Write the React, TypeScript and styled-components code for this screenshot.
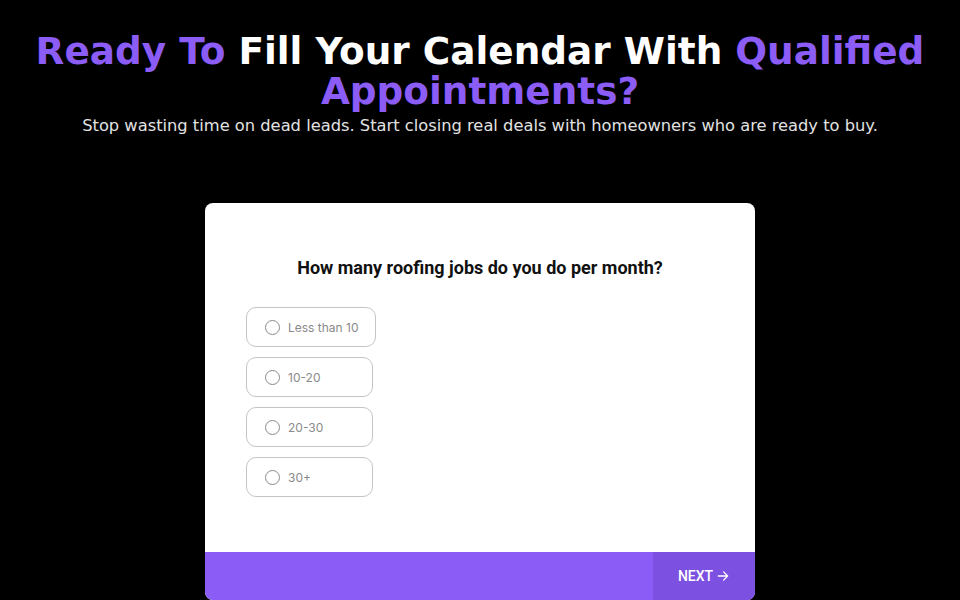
import React, { useState } from "react";
import styled, { createGlobalStyle } from "styled-components";

const Global = createGlobalStyle`
  html, body { margin: 0; padding: 0; background: #000; }
  body { font-family: "DejaVu Sans", sans-serif; }
  * { box-sizing: border-box; }
`;

const Page = styled.div`
  width: 960px;
  height: 600px;
  overflow: hidden;
  background: #000;
  display: flex;
  flex-direction: column;
  align-items: center;
  padding-top: 31px;
`;

const Title = styled.h1`
  margin: 0;
  font-family: "DejaVu Sans", sans-serif;
  font-weight: 700;
  font-size: 37.4px;
  line-height: 40px;
  color: #fff;
  text-align: center;
  width: 940px;
`;

const Accent = styled.span`
  color: #8b5cf6;
`;

const Subtitle = styled.p`
  margin: 5px 0 0;
  font-family: "DejaVu Sans", sans-serif;
  font-size: 16.3px;
  line-height: 20px;
  color: #e2e2e2;
  text-align: center;
  white-space: nowrap;
`;

const Card = styled.div`
  margin-top: 67px;
  width: 550px;
  height: 397px;
  background: #fff;
  border-radius: 8px;
  display: flex;
  flex-direction: column;
  overflow: hidden;
`;

const Body = styled.div`
  flex: 1;
  padding: 54px 41px 0;
  display: flex;
  flex-direction: column;
`;

const Question = styled.h2`
  margin: 0 0 28px;
  font-family: Roboto, sans-serif;
  font-weight: 700;
  font-size: 18px;
  line-height: 22px;
  color: #111;
  text-align: center;
`;

const Options = styled.div`
  display: flex;
  flex-direction: column;
  align-items: flex-start;
  gap: 10px;
`;

const Option = styled.label`
  display: flex;
  align-items: center;
  gap: 8px;
  min-width: 127px;
  height: 40px;
  padding: 0 16px 0 18px;
  border: 1px solid #c4c4c4;
  border-radius: 10px;
  font-family: Inter, sans-serif;
  font-size: 12px;
  color: #8a8a8a;
  cursor: pointer;
`;

const Radio = styled.span<{ $on: boolean }>`
  width: 15px;
  height: 15px;
  border-radius: 50%;
  border: 1.3px solid #8a8a8a;
  background: ${(p) => (p.$on ? "#8b5cf6" : "transparent")};
  flex-shrink: 0;
`;

const Footer = styled.div`
  height: 48px;
  background: #8b5cf6;
  display: flex;
  justify-content: flex-end;
`;

const NextButton = styled.button`
  width: 102px;
  height: 100%;
  border: none;
  background: #7c50e0;
  color: #fff;
  font-family: Roboto, sans-serif;
  font-weight: 500;
  font-size: 14px;
  display: flex;
  align-items: center;
  justify-content: center;
  gap: 3px;
  cursor: pointer;
`;

const options = ["Less than 10", "10-20", "20-30", "30+"];

export default function App() {
  const [sel, setSel] = useState<number | null>(null);
  return (
    <Page>
      <Global />
      <Title>
        <Accent>Ready To</Accent> Fill Your Calendar With <Accent>Qualified Appointments?</Accent>
      </Title>
      <Subtitle>
        Stop wasting time on dead leads. Start closing real deals with homeowners who are ready to buy.
      </Subtitle>
      <Card>
        <Body>
          <Question>How many roofing jobs do you do per month?</Question>
          <Options>
            {options.map((o, i) => (
              <Option key={o} onClick={() => setSel(i)}>
                <Radio $on={sel === i} />
                {o}
              </Option>
            ))}
          </Options>
        </Body>
        <Footer>
          <NextButton>
            NEXT
            <svg width="14" height="14" viewBox="0 0 24 24" fill="none" stroke="#fff" strokeWidth="2.2" strokeLinecap="round" strokeLinejoin="round">
              <path d="M4 12h16M13 5l7 7-7 7" />
            </svg>
          </NextButton>
        </Footer>
      </Card>
    </Page>
  );
}
